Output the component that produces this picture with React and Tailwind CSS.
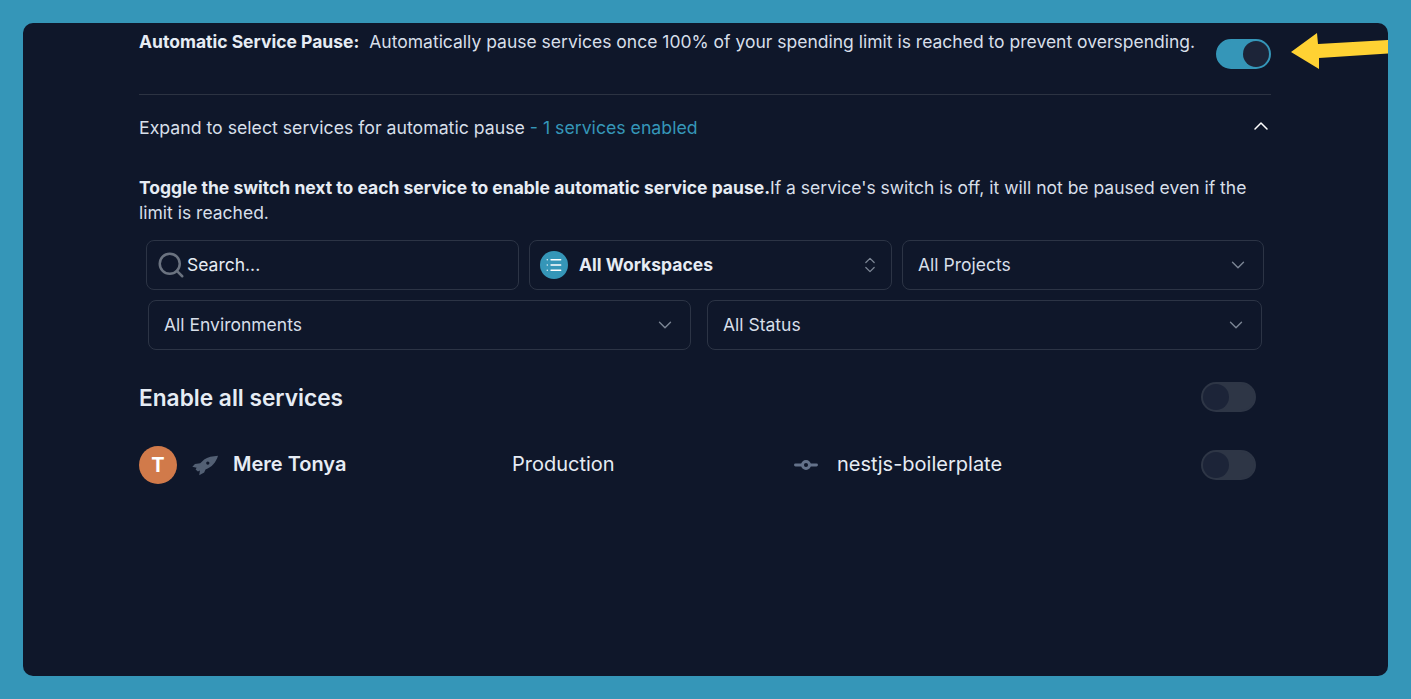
import React from 'react';
import { ChevronDown, ChevronUp, ChevronsUpDown, GitCommitHorizontal, List, Search } from 'lucide-react';

function Toggle({ on }) {
  return (
    <div className={`w-[55px] h-[30px] rounded-full border-2 flex items-center shrink-0 ${on ? 'bg-[#3596b8] border-[#3596b8] justify-end' : 'bg-[#2e3646] border-[#2e3646] justify-start'}`}>
      <div className="w-[26px] h-[26px] rounded-full bg-[#1c2438]"></div>
    </div>
  );
}

function Select({ label, className }) {
  return (
    <div className={`h-[50px] border border-[#2c3445] rounded-lg flex items-center justify-between pl-[15px] pr-[14px] text-[#d7dfe9] ${className}`}>
      <span>{label}</span>
      <ChevronDown className="w-[22px] h-[22px] text-[#7c8695] stroke-[1.5]" />
    </div>
  );
}

export default function App() {
  return (
    <div className="h-[699px] bg-[#3596b8] p-[23px] overflow-hidden font-['Inter',sans-serif] text-[17.5px]">
      <div className="relative h-[653px] bg-[#0f172a] rounded-[10px] pl-[116px] pr-[117px] overflow-hidden">
        {/* Arrow */}
        <svg className="absolute right-0 top-[8px]" width="98" height="40" viewBox="0 0 98 40">
          <polygon points="1,21 27,2 28,13 98,9 98,22.5 29,27 29,38" fill="#ffd233" />
        </svg>

        {/* Pause header */}
        <div className="flex justify-between h-[72px] border-b border-[#2c3342]">
          <p className="pt-[7px] leading-[24px] text-[#d7dfe9]">
            <span className="font-bold text-[#e6ecf4] mr-[10px]">Automatic Service Pause:</span>
            Automatically pause services once 100% of your spending limit is reached to prevent overspending.
          </p>
          <div className="pt-[16px]"><Toggle on /></div>
        </div>

        <div className="flex items-center justify-between h-[66px]">
          <p className="text-[#d7dfe9] text-[17.7px]">
            Expand to select services for automatic pause <span className="text-[#3596b8]">- 1 services enabled</span>
          </p>
          <ChevronUp className="w-[24px] h-[24px] text-white stroke-[1.5] -mt-[5px] -mr-[2px]" />
        </div>

        <p className="mt-[14px] leading-[25px] text-[#d7dfe9]">
          <span className="font-bold text-[#e6ecf4]">Toggle the switch next to each service to enable automatic service pause.</span>
          If a service's switch is off, it will not be paused even if the limit is reached.
        </p>

        {/* Filters */}
        <div className="flex gap-[10px] mt-[15px] ml-[7px]">
          <div className="w-[373px] h-[50px] border border-[#2c3445] rounded-lg flex items-center pl-[9px] gap-[1px] text-[#e6ecf4]">
            <Search className="w-[30px] h-[30px] text-[#6b7380] stroke-[2]" />
            <span>Search...</span>
          </div>
          <div className="w-[363px] h-[50px] border border-[#2c3445] rounded-lg flex items-center pl-[10px] pr-[11px] text-[#e6ecf4]">
            <div className="w-[28px] h-[28px] rounded-full bg-[#3596b8] flex items-center justify-center mr-[11px]">
              <List className="w-[18px] h-[18px] text-white stroke-[1.75]" />
            </div>
            <span className="font-bold">All Workspaces</span>
            <ChevronsUpDown className="w-[20px] h-[20px] text-[#7c8695] stroke-[1.5] ml-auto" />
          </div>
          <Select label="All Projects" className="w-[362px]" />
        </div>
        <div className="flex gap-[16px] mt-[10px] ml-[9px]">
          <Select label="All Environments" className="w-[543px]" />
          <Select label="All Status" className="w-[555px]" />
        </div>

        <div className="flex items-center justify-between mt-[31px] pr-[15px]">
          <h2 className="text-[22.7px] font-semibold text-[#e6ecf4] leading-[30px] mt-[2px]">Enable all services</h2>
          <Toggle />
        </div>

        {/* Service row */}
        <div className="flex items-center mt-[33px] pr-[15px] text-[20px]">
          <div className="w-[38px] h-[38px] rounded-full bg-[#d17a4a] flex items-center justify-center text-white font-bold text-[20px]">T</div>
          <svg className="ml-[15px] mb-[1px]" width="27" height="22" viewBox="185 70 82 66">
            <path
              fillRule="evenodd"
              fill="#536074"
              d="M264 75 C248 76 232 79 222 86 L210 98 L194 100 L186 108 L199 111 L196 117 L203 123 L209 120 L207 134 L222 126 L226 117 C245 110 258 95 264 75 Z M233 92 A5 5 0 1 0 233 102 A5 5 0 1 0 233 92 Z"
            />
          </svg>
          <span className="ml-[14px] w-[279px] font-semibold text-[#e6ecf4] mb-[2px]">Mere Tonya</span>
          <span className="w-[280px] text-[#e6ecf4] mb-[2px]">Production</span>
          <GitCommitHorizontal className="w-[28px] h-[28px] text-[#64728a] stroke-[2.5]" />
          <span className="ml-[17px] text-[#e6ecf4] mb-[2px]">nestjs-boilerplate</span>
          <div className="ml-auto"><Toggle /></div>
        </div>
      </div>
    </div>
  );
}
